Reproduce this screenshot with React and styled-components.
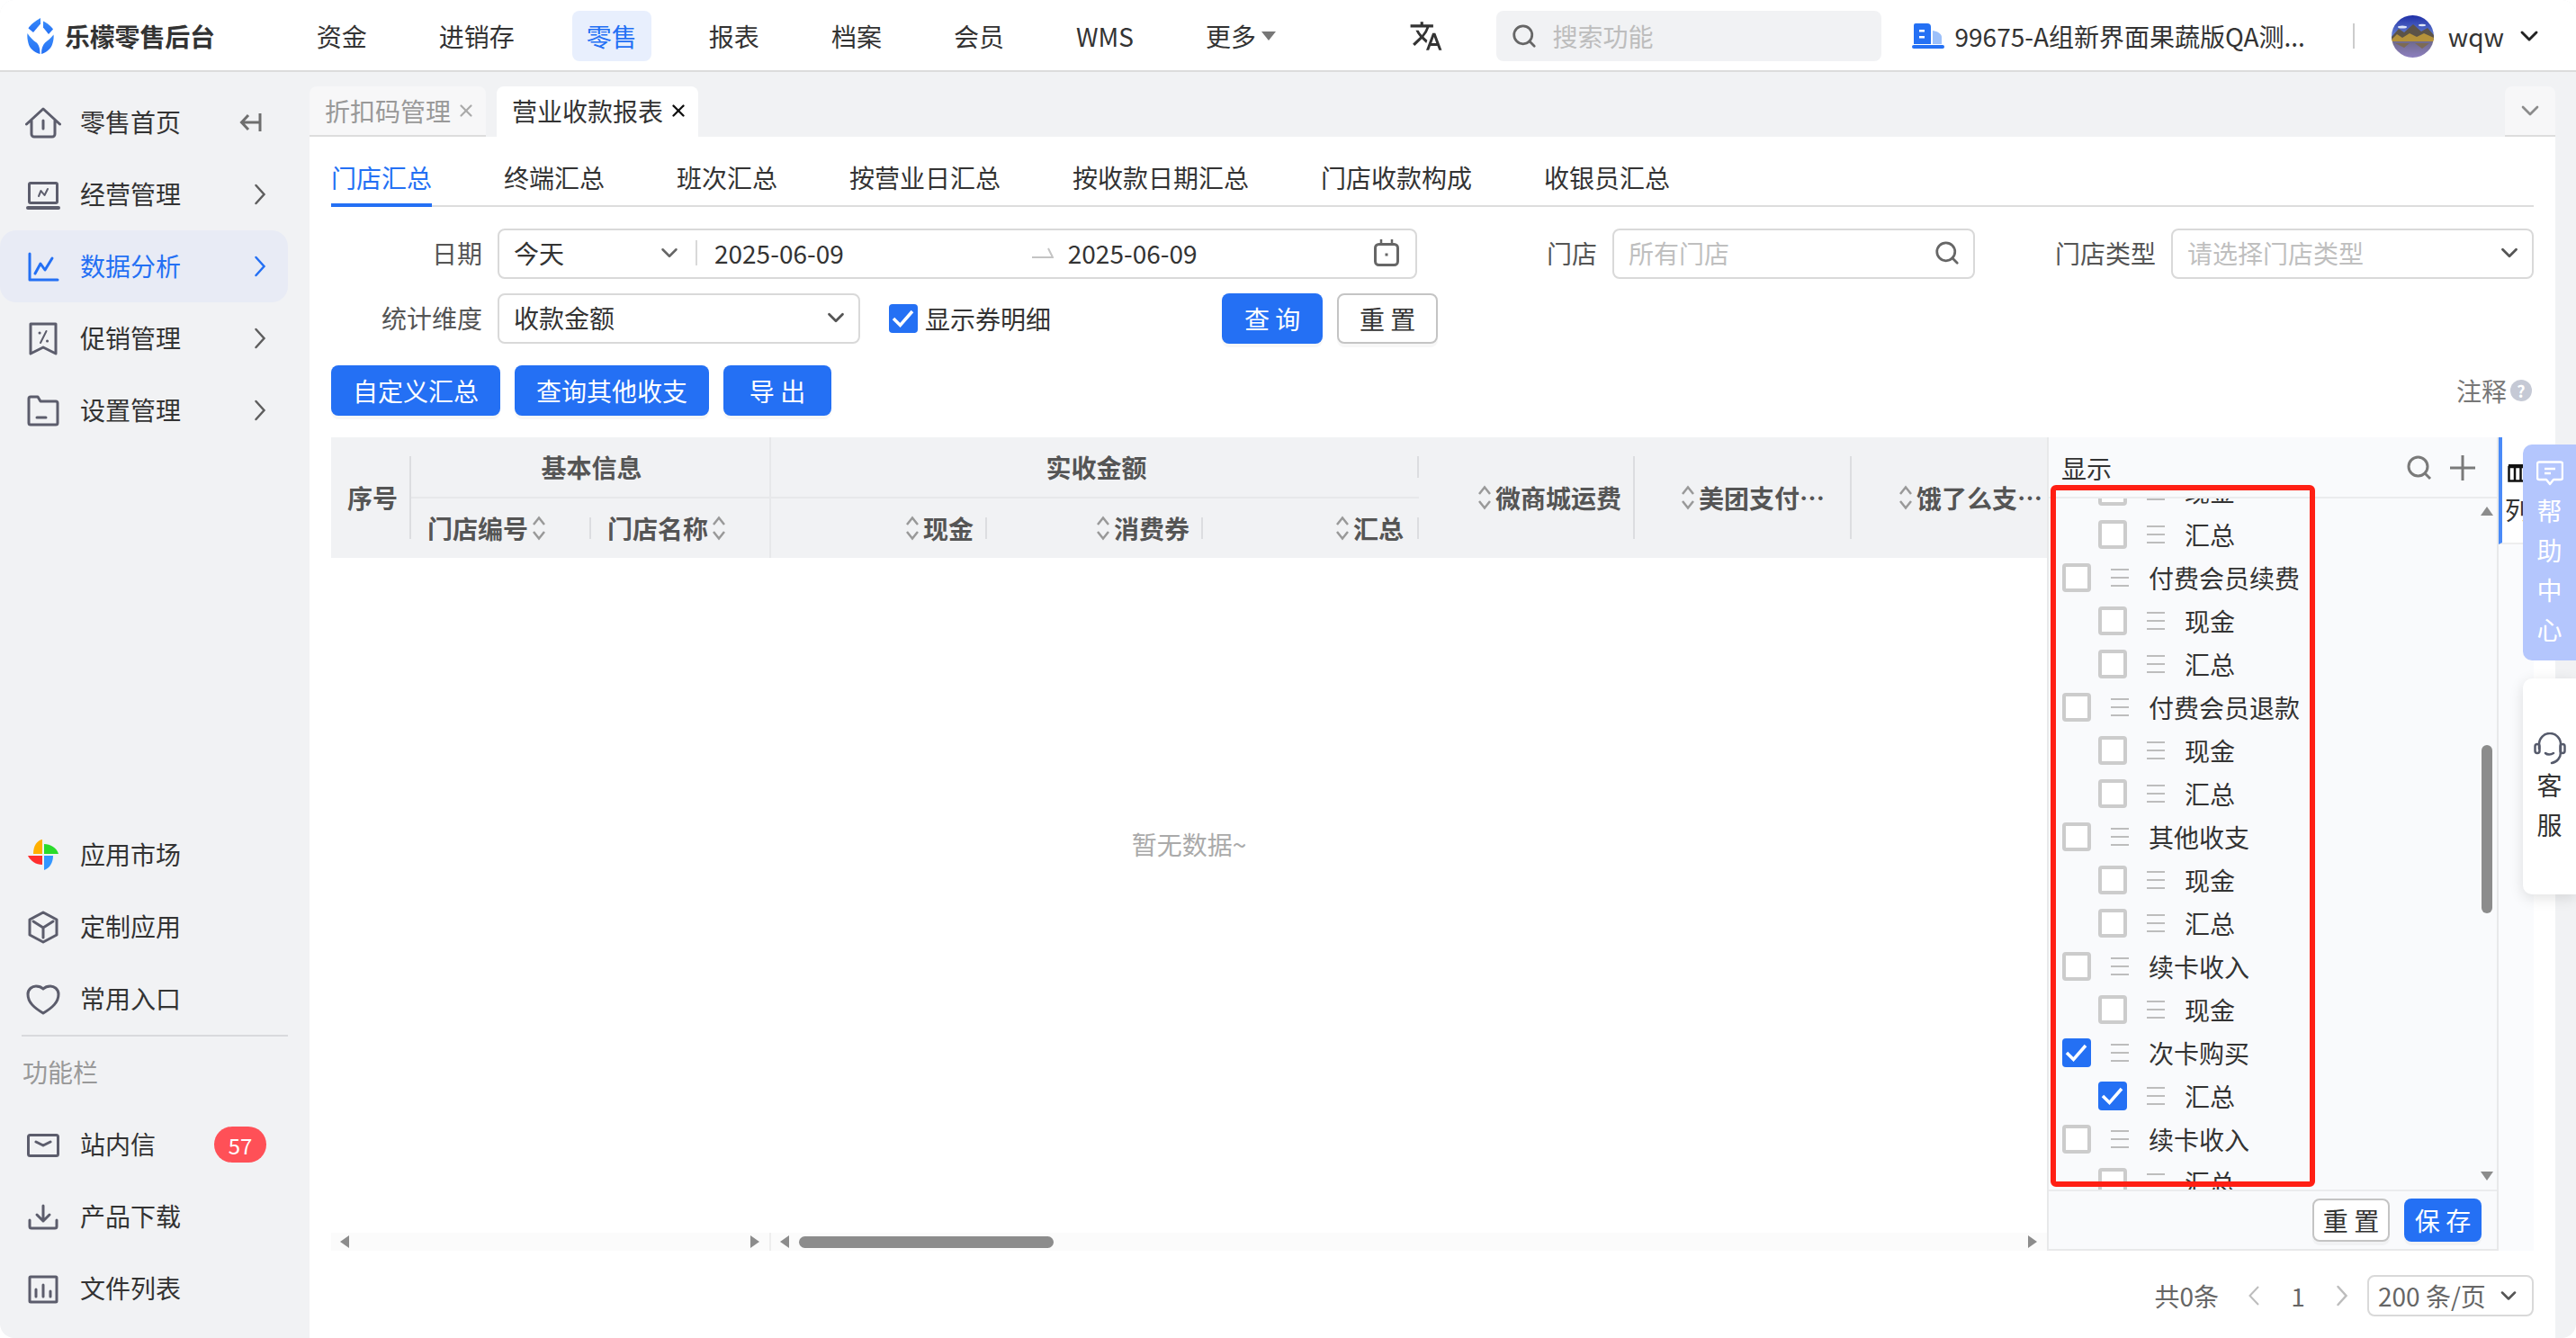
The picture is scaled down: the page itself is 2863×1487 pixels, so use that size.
import React from 'react'
import styled, { createGlobalStyle } from 'styled-components'
import { ChevronDown, Search, X } from 'lucide-react'
import { MdTranslate } from 'react-icons/md'

const BLUE = '#2470f4'
const INK = '#333'
const ICON = '#5c5d6c'

const navItems = ['资金', '进销存', '零售', '报表', '档案', '会员', 'WMS']
const subTabs = ['门店汇总', '终端汇总', '班次汇总', '按营业日汇总', '按收款日期汇总', '门店收款构成', '收银员汇总']

const columnRows = [
    { label: '现金', child: true },
    { label: '汇总', child: true },
    { label: '付费会员续费' },
    { label: '现金', child: true },
    { label: '汇总', child: true },
    { label: '付费会员退款' },
    { label: '现金', child: true },
    { label: '汇总', child: true },
    { label: '其他收支' },
    { label: '现金', child: true },
    { label: '汇总', child: true },
    { label: '续卡收入' },
    { label: '现金', child: true },
    { label: '次卡购买', checked: true },
    { label: '汇总', child: true, checked: true },
    { label: '续卡收入' },
    { label: '汇总', child: true }
]

const LineIcon = ({ children, color = ICON }) => (
    <svg width='40' height='40' viewBox='0 0 40 40' fill='none' stroke={color} strokeWidth='3' strokeLinecap='round' strokeLinejoin='round'>
        {children}
    </svg>
)

const HomeIcon = () => <LineIcon><path d='M1.5 22 L20 5 L38.5 22 M7 18 V33 a3 3 0 0 0 3 3 H30 a3 3 0 0 0 3 -3 V18 M20 18 v9' /></LineIcon>
const BoardIcon = () => (
    <LineIcon>
        <rect x='4.5' y='7.5' width='31' height='22' rx='1.5' />
        <path d='M3 35 H37' strokeWidth='4' />
        <path d='M15 22 L17.5 16 L21.5 21 L25 14' strokeWidth='2' />
    </LineIcon>
)
const ChartIcon = ({ color }) => <LineIcon color={color}><path d='M5 6 V35 H36' /><path d='M11 28 L17 17 L22 24 L30 11' /></LineIcon>
const PromoIcon = () => (
    <LineIcon>
        <path d='M6 4 H34 V37 L20 30 L6 37 Z' />
        <path d='M23.5 12 L17 25' strokeWidth='2' />
        <path d='M16 14 h.1 M24.5 23 h.1' strokeWidth='3' />
    </LineIcon>
)
const FolderIcon = () => <LineIcon><path d='M4 7 a2 2 0 0 1 2 -2 H14 L17 10 H34 a2 2 0 0 1 2 2 V34 a2 2 0 0 1 -2 2 H6 a2 2 0 0 1 -2 -2 Z M13 28 H23' /></LineIcon>
const CubeIcon = () => <LineIcon><path d='M20 4 L35 12 V29 L20 37 L5 29 V12 Z M9 14 L20 21 L31 14 M20 21 V32' /></LineIcon>
const HeartIcon = () => <LineIcon><path d='M20 36 C10 30 3 24 3 15 C3 9 8 6 12 6 C15 6 18 7 20 9 C22 7 25 6 28 6 C32 6 37 9 37 15 C37 24 30 30 20 36 Z' /></LineIcon>
const MailIcon = () => <LineIcon><rect x='3.5' y='9.5' width='33' height='23' rx='2' /><path d='M12 17 L20 21 L28 17' /></LineIcon>
const DownloadIcon = () => <LineIcon><path d='M20 8 V25 M13 18 L20 25 L27 18 M5 24 V31 a2 2 0 0 0 2 2 H33 a2 2 0 0 0 2 -2 V24' /></LineIcon>
const BarsIcon = () => <LineIcon><rect x='5' y='7' width='30' height='28' rx='1' /><path d='M12 21 V29 M20 16 V29 M28 23 V29' /></LineIcon>

const WheelIcon = () => (
    <svg width='40' height='40' viewBox='0 0 40 40'>
        <path d='M19 3 C13 4 9 10 9 19 H19 Z' fill='#ffb000' />
        <path d='M21 8 C28 8 35 12 37 19 H21 Z' fill='#2bdb2b' />
        <path d='M21 21 H31 C31 29 27 35 21 37 Z' fill='#3396ff' />
        <path d='M3 21 H19 V31 C12 31 6 27 3 21 Z' fill='#ff2e2e' />
    </svg>
)

const CollapseIcon = () => (
    <svg width='26' height='22' viewBox='0 0 26 22' fill='none' stroke='#6e6e6e' strokeWidth='3'>
        <path d='M23 1 V21 M23 11 H3 M10 3 L2.5 11 L10 19' />
    </svg>
)

const NextIcon = ({ color = '#5e5e5e' }) => (
    <svg width='14' height='26' viewBox='0 0 14 26' fill='none' stroke={color} strokeWidth='2.5' strokeLinecap='round'>
        <path d='M2.5 3 L11.5 13 L2.5 23' />
    </svg>
)

const PrevIcon = () => (
    <svg width='14' height='26' viewBox='0 0 14 26' fill='none' stroke='#bdbdbd' strokeWidth='2'>
        <path d='M12 3 L2.5 13 L12 23' />
    </svg>
)

const LogoMark = () => (
    <svg width='30' height='40' viewBox='0 0 30 40'>
        <defs>
            <linearGradient id='logoFill' x1='0' y1='0' x2='0' y2='1'>
                <stop offset='0' stopColor='#3a8cfa' />
                <stop offset='1' stopColor='#2470f4' />
            </linearGradient>
        </defs>
        <g fill='url(#logoFill)'>
            <path d='M15 0 V6.5 L7 16 L1.5 11.5 C3 8 10 3 15 0 Z' />
            <path d='M18 3.5 C22 5.5 27 9 29 12.5 L24 18 L18 10.5 Z' />
            <path d='M0.5 17 C3 21 7 25 10 27 C13 29 14.5 33 14.5 40 C8 38 3 34 1.5 28 C0.5 24 0 20 0.5 17 Z' />
            <path d='M29.5 18.5 C27 22 23 25 20 27.5 C17.5 30 16 34 16 40 C22 38 27 34 28.5 28 C29.5 25 30 21 29.5 18.5 Z' />
        </g>
    </svg>
)

const StoreIcon = () => (
    <svg width='36' height='28' viewBox='0 0 36 28'>
        <path d='M2 2 a2 2 0 0 1 2 -2 H17 a4 4 0 0 1 4 4 V23 H2 Z' fill={BLUE} />
        <path d='M23 8 C29 9 33 12 33 15 V23 H23 Z' fill='#9cc0fa' />
        <rect x='0' y='24' width='36' height='4' rx='2' fill={BLUE} />
        <rect x='8' y='7' width='6' height='2.5' fill='#fff' />
        <rect x='8' y='14' width='6' height='2.5' fill='#fff' />
    </svg>
)

const AvatarImage = () => (
    <svg width='47' height='47' viewBox='0 0 47 47'>
        <defs>
            <clipPath id='avatarClip'><circle cx='23.5' cy='23.5' r='23.5' /></clipPath>
            <linearGradient id='avatarSky' x1='0' y1='0' x2='0' y2='1'>
                <stop offset='0' stopColor='#1f2fa8' />
                <stop offset='1' stopColor='#6e8ad6' />
            </linearGradient>
            <linearGradient id='avatarLake' x1='0' y1='0' x2='0' y2='1'>
                <stop offset='0' stopColor='#6f6a8c' />
                <stop offset='1' stopColor='#8d7fc0' />
            </linearGradient>
        </defs>
        <g clipPath='url(#avatarClip)'>
            <rect width='47' height='26' fill='url(#avatarSky)' />
            <ellipse cx='12' cy='13' rx='5' ry='1.5' fill='#dfe6f7' />
            <ellipse cx='34' cy='11' rx='4' ry='1.2' fill='#dfe6f7' />
            <path d='M0 24 L8 15 L14 19 L24 10 L33 18 L40 14 L47 22 V28 H0 Z' fill='#5c5348' />
            <path d='M0 27 L6 21 L12 25 L20 20 L28 24 L36 20 L47 25 V30 H0 Z' fill='#b5923a' />
            <rect y='29' width='47' height='18' fill='url(#avatarLake)' />
            <path d='M4 31 H20 L14 36 Z M26 31 H42 L34 37 Z' fill='#7c6a55' />
        </g>
    </svg>
)

const CalendarIcon = () => (
    <svg width='28' height='30' viewBox='0 0 28 30' fill='none' stroke='#666' strokeWidth='3'>
        <rect x='1.5' y='5.5' width='25' height='23' rx='4' />
        <path d='M8 0 V6 M20 0 V6' strokeWidth='2.5' />
        <path d='M12.5 17 h3' strokeWidth='3' />
    </svg>
)

const RangeArrow = () => (
    <svg width='24' height='14' viewBox='0 0 24 14' fill='none' stroke='#c4c4c4' strokeWidth='2'>
        <path d='M0 12 H23 L18 2' />
    </svg>
)

const SortIcon = () => (
    <svg width='16' height='28' viewBox='0 0 16 28' fill='none' stroke='#999' strokeWidth='2.5'>
        <path d='M2 10 L8 2.5 L14 10 M2 18 L8 25.5 L14 18' />
    </svg>
)

const TickIcon = ({ size = 32 }) => (
    <svg width={size} height={size} viewBox='0 0 32 32' fill='none' stroke='#fff' strokeWidth='3.5'>
        <path d='M5 16 L12.5 23.5 L26 8' />
    </svg>
)

const DragIcon = () => (
    <svg width='20' height='20' viewBox='0 0 20 20' stroke='#bdbdbd' strokeWidth='2'>
        <path d='M0 1 H20 M0 10 H20 M0 19 H20' />
    </svg>
)

const Triangle = ({ dir }) => {
    const points = {
        up: '0,10 7,0 14,10',
        down: '0,0 14,0 7,10',
        left: '10,0 10,14 0,7',
        right: '0,0 10,7 0,14'
    }
    const vertical = dir === 'up' || dir === 'down'
    return (
        <svg width={vertical ? 14 : 10} height={vertical ? 10 : 14} viewBox={vertical ? '0 0 14 10' : '0 0 10 14'}>
            <polygon points={points[dir]} fill='#8c8c8c' />
        </svg>
    )
}

const PanelSearch = () => (
    <svg width='28' height='28' viewBox='0 0 28 28' fill='none' stroke='#7a7a7a' strokeWidth='3'>
        <circle cx='12.5' cy='12.5' r='10.5' />
        <path d='M20 20 L26 26' />
    </svg>
)

const PanelPlus = () => (
    <svg width='28' height='28' viewBox='0 0 28 28' stroke='#7a7a7a' strokeWidth='3'>
        <path d='M14 0 V28 M0 14 H28' />
    </svg>
)

const ColumnsIcon = () => (
    <svg width='22' height='20' viewBox='0 0 22 20' fill='none' stroke='#111' strokeWidth='2.5'>
        <path d='M1.5 3 H20.5 V18.5 H1.5 Z M8 3 V18.5 M14.5 3 V18.5' />
        <path d='M1 2 H21' strokeWidth='4' />
    </svg>
)

const BubbleIcon = () => (
    <svg width='30' height='28' viewBox='0 0 30 28' fill='none' stroke='#fff' strokeWidth='2.5' strokeLinejoin='round'>
        <path d='M3 1.5 H27 a2 2 0 0 1 2 2 V19 a2 2 0 0 1 -2 2 H19 L15 26 L11 21 H3 a2 2 0 0 1 -2 -2 V3.5 a2 2 0 0 1 2 -2 Z' />
        <path d='M9 9 H21 M9 14 H16' />
    </svg>
)

const HeadsetIcon = () => (
    <svg width='36' height='36' viewBox='0 0 36 36' fill='none' stroke='#555a6b' strokeWidth='2.5' strokeLinecap='round'>
        <path d='M6 18 V13 a12 12 0 0 1 24 0 V22 C30 28 26 33 20 34' />
        <rect x='1.5' y='13' width='5' height='10' rx='2.5' />
        <rect x='29.5' y='13' width='5' height='10' rx='2.5' />
        <path d='M13 23 C15 25 19 25 22 23' />
    </svg>
)

const App = () => {

    return (
        <>
            <GlobalStyle />
            <Shell>
                <TopBar>
                    <LogoBox><LogoMark /></LogoBox>
                    <LogoText>乐檬零售后台</LogoText>
                    <Nav>
                        {navItems.map(item => (
                            <NavItem key={item} $active={item === '零售'}>{item}</NavItem>
                        ))}
                        <NavItem>更多<MoreCaret /></NavItem>
                    </Nav>
                    <TopRight>
                        <MdTranslate size={38} color='#333' />
                        <SearchBox>
                            <Search size={30} color='#666' strokeWidth={2.2} />
                            <span>搜索功能</span>
                        </SearchBox>
                        <StoreBox>
                            <StoreIcon />
                            <span>99675-A组新界面果蔬版QA测...</span>
                        </StoreBox>
                        <TopDivider />
                        <AvatarImage />
                        <UserName>wqw</UserName>
                        <ChevronDown size={32} color='#222' strokeWidth={2.2} />
                    </TopRight>
                </TopBar>

                <Main>
                    <Sidebar>
                        <TopMenu>
                            <SideRow><HomeIcon /><SideLabel>零售首页</SideLabel><CollapseBox><CollapseIcon /></CollapseBox></SideRow>
                            <SideRow><BoardIcon /><SideLabel>经营管理</SideLabel><NextIcon /></SideRow>
                            <SideRow $active><ChartIcon color={BLUE} /><SideLabel>数据分析</SideLabel><NextIcon color={BLUE} /></SideRow>
                            <SideRow><PromoIcon /><SideLabel>促销管理</SideLabel><NextIcon /></SideRow>
                            <SideRow><FolderIcon /><SideLabel>设置管理</SideLabel><NextIcon /></SideRow>
                        </TopMenu>
                        <BottomMenu>
                            <SideRow><WheelIcon /><SideLabel>应用市场</SideLabel></SideRow>
                            <SideRow><CubeIcon /><SideLabel>定制应用</SideLabel></SideRow>
                            <SideRow><HeartIcon /><SideLabel>常用入口</SideLabel></SideRow>
                            <SideDivider />
                            <SideTitle>功能栏</SideTitle>
                            <SideRow><MailIcon /><SideLabel>站内信</SideLabel><CountBadge>57</CountBadge></SideRow>
                            <SideRow><DownloadIcon /><SideLabel>产品下载</SideLabel></SideRow>
                            <SideRow><BarsIcon /><SideLabel>文件列表</SideLabel></SideRow>
                        </BottomMenu>
                    </Sidebar>

                    <Content>
                        <PageTabs>
                            <PageTabList>
                                <PageTab>折扣码管理<X size={22} color='#aaa' strokeWidth={2.4} /></PageTab>
                                <PageTab $active>营业收款报表<X size={22} color='#111' strokeWidth={2.6} /></PageTab>
                            </PageTabList>
                            <TabsMore><ChevronDown size={32} color='#8c8c8c' strokeWidth={2} /></TabsMore>
                        </PageTabs>

                        <Card>
                            <SubTabs>
                                {subTabs.map((tab, i) => (
                                    <SubTab key={tab} $active={i === 0}>{tab}</SubTab>
                                ))}
                            </SubTabs>

                            <FilterRow>
                                <FieldLabel $width='168px'>日期</FieldLabel>
                                <Field $width='1022px'>
                                    <RangeSelect>今天<ChevronDown size={30} color='#666' strokeWidth={2} /></RangeSelect>
                                    <RangeDate>2025-06-09</RangeDate>
                                    <RangeGap><RangeArrow /></RangeGap>
                                    <span>2025-06-09</span>
                                    <FieldEnd $gap='18px'><CalendarIcon /></FieldEnd>
                                </Field>
                                <FieldLabel $width='200px'>门店</FieldLabel>
                                <Field $width='403px' $muted>
                                    <span>所有门店</span>
                                    <FieldEnd $gap='14px'><Search size={30} color='#666' strokeWidth={2.2} /></FieldEnd>
                                </Field>
                                <FieldLabel $width='201px'>门店类型</FieldLabel>
                                <Field $width='403px' $muted>
                                    <span>请选择门店类型</span>
                                    <FieldEnd $gap='10px'><ChevronDown size={30} color='#555' strokeWidth={2.2} /></FieldEnd>
                                </Field>
                            </FilterRow>

                            <FilterRow>
                                <FieldLabel $width='168px'>统计维度</FieldLabel>
                                <Field $width='403px'>
                                    <span>收款金额</span>
                                    <FieldEnd $gap='10px'><ChevronDown size={30} color='#555' strokeWidth={2.2} /></FieldEnd>
                                </Field>
                                <DetailToggle>
                                    <CheckBox $checked><TickIcon /></CheckBox>
                                    <span>显示券明细</span>
                                </DetailToggle>
                                <ActionGroup>
                                    <Button $primary>查 询</Button>
                                    <Button>重 置</Button>
                                </ActionGroup>
                            </FilterRow>

                            <ToolRow>
                                <Button $primary $width='188px'>自定义汇总</Button>
                                <Button $primary $width='216px'>查询其他收支</Button>
                                <Button $primary $width='120px'>导 出</Button>
                                <NoteLink>注释<HelpDot>?</HelpDot></NoteLink>
                            </ToolRow>

                            <TableWrap>
                                <TableArea>
                                    <TableHead>
                                        <HeadCell $rows={2} $center $mark='tall'>序号</HeadCell>
                                        <HeadCell $cols={2} $center $edge>基本信息</HeadCell>
                                        <HeadCell $cols={3} $center $mark='short'>实收金额</HeadCell>
                                        <HeadCell $rows={2} $right $pad='15px' $mark='tall'><SortIcon />微商城运费</HeadCell>
                                        <HeadCell $rows={2} $right $pad='30px' $mark='tall'><SortIcon />美团支付…</HeadCell>
                                        <HeadCell $rows={2} $right $pad='5px'><SortIcon />饿了么支…</HeadCell>
                                        <HeadCell $top $mark='short'>门店编号<SortIcon /></HeadCell>
                                        <HeadCell $top $edge>门店名称<SortIcon /></HeadCell>
                                        <HeadCell $top $right $pad='15px' $mark='short'><SortIcon />现金</HeadCell>
                                        <HeadCell $top $right $pad='15px' $mark='short'><SortIcon />消费券</HeadCell>
                                        <HeadCell $top $right $pad='17px' $mark='short'><SortIcon />汇总</HeadCell>
                                    </TableHead>
                                    <TableBody>暂无数据~</TableBody>
                                    <ScrollRow>
                                        <ScrollPart $width='489px'>
                                            <Triangle dir='left' />
                                            <Triangle dir='right' />
                                        </ScrollPart>
                                        <ScrollPart>
                                            <Triangle dir='left' />
                                            <ScrollThumb />
                                            <Triangle dir='right' />
                                        </ScrollPart>
                                    </ScrollRow>
                                </TableArea>

                                <ColumnPanel>
                                    <PanelHead>
                                        <span>显示</span>
                                        <PanelTools><PanelSearch /><PanelPlus /></PanelTools>
                                    </PanelHead>
                                    <PanelBody>
                                        <ColumnList>
                                            {columnRows.map((row, i) => (
                                                <ColumnRow key={i} $child={row.child}>
                                                    <CheckBox $checked={row.checked}>{row.checked && <TickIcon />}</CheckBox>
                                                    <DragIcon />
                                                    <span>{row.label}</span>
                                                </ColumnRow>
                                            ))}
                                        </ColumnList>
                                        <ListScroll>
                                            <Triangle dir='up' />
                                            <ListThumb />
                                            <Triangle dir='down' />
                                        </ListScroll>
                                    </PanelBody>
                                    <PanelFoot>
                                        <Button $small>重 置</Button>
                                        <Button $small $primary>保 存</Button>
                                    </PanelFoot>
                                    <RedFrame />
                                </ColumnPanel>

                                <ColumnBar>
                                    <ColumnTab>
                                        <ColumnsIcon />
                                        <ColumnWord>列</ColumnWord>
                                    </ColumnTab>
                                </ColumnBar>
                            </TableWrap>

                            <Pager>
                                <PagerTotal>共0条</PagerTotal>
                                <PrevIcon />
                                <PagerNumber>1</PagerNumber>
                                <PagerNext><NextIcon color='#bdbdbd' /></PagerNext>
                                <PageSize>200 条/页<ChevronDown size={28} color='#555' strokeWidth={2.2} /></PageSize>
                            </Pager>
                        </Card>
                    </Content>
                </Main>

                <HelpTab>
                    <BubbleIcon />
                    <span>帮</span><span>助</span><span>中</span><span>心</span>
                </HelpTab>
                <ServiceTab>
                    <HeadsetIcon />
                    <span>客</span><span>服</span>
                </ServiceTab>
            </Shell>
        </>
    )
}

export default App

const GlobalStyle = createGlobalStyle`
    html, body {
        margin: 0;
        padding: 0;
        background: #fff;
    }

    body {
        font-family: "Noto Sans CJK SC", "Noto Sans", sans-serif;
        font-size: 28px;
        color: ${INK};
    }

    * {
        box-sizing: border-box;
    }
`

const Shell = styled.div`
    position: relative;
    width: 2863px;
    height: 1487px;
    overflow: hidden;
    border-radius: 16px;
    background: #f1f2f4;
    display: flex;
    flex-direction: column;
`

const TopBar = styled.header`
    height: 80px;
    flex-shrink: 0;
    display: flex;
    align-items: center;
    padding: 2px 36px 0 30px;
    background: #fff;
    border-bottom: 2px solid #dcdcdc;
`

const LogoBox = styled.div`
    display: flex;
    margin-right: 12px;
`

const LogoText = styled.div`
    font-weight: 700;
    font-size: 28px;
    letter-spacing: -0.2px;
    color: #333;
`

const Nav = styled.nav`
    display: flex;
    gap: 48px;
    margin-left: 97px;
`

const NavItem = styled.div`
    height: 56px;
    padding: 0 16px;
    display: flex;
    align-items: center;
    border-radius: 8px;
    background: ${p => p.$active ? '#e8effd' : 'transparent'};
    color: ${p => p.$active ? BLUE : INK};
`

const MoreCaret = styled.i`
    width: 0;
    height: 0;
    margin-left: 6px;
    border-left: 8px solid transparent;
    border-right: 8px solid transparent;
    border-top: 10px solid #777;
`

const TopRight = styled.div`
    display: flex;
    align-items: center;
    margin-left: auto;
`

const SearchBox = styled.div`
    width: 428px;
    height: 56px;
    margin-left: 59px;
    padding-left: 16px;
    display: flex;
    align-items: center;
    gap: 17px;
    border-radius: 8px;
    background: #f1f2f4;
    color: #bdbdbd;
`

const StoreBox = styled.div`
    margin-left: 34px;
    display: flex;
    align-items: center;
    gap: 12px;
    white-space: nowrap;
`

const TopDivider = styled.div`
    width: 2px;
    height: 28px;
    margin: 0 41px 0 53px;
    background: #ccc;
`

const UserName = styled.span`
    margin: 0 12px 0 16px;
`

const Main = styled.main`
    flex: 1;
    min-height: 0;
    display: flex;
`

const Sidebar = styled.aside`
    width: 344px;
    flex-shrink: 0;
    display: flex;
    flex-direction: column;
    justify-content: space-between;
`

const TopMenu = styled.div`
    padding-top: 16px;
`

const BottomMenu = styled.div`
    padding-bottom: 15px;
`

const SideRow = styled.div`
    width: 320px;
    height: 80px;
    padding: 0 24px 0 28px;
    display: flex;
    align-items: center;
    gap: 21px;
    border-radius: 18px;
    background: ${p => p.$active ? '#e8ebf5' : 'transparent'};
    color: ${p => p.$active ? BLUE : INK};
`

const SideLabel = styled.span`
    flex: 1;
    padding-bottom: 2px;
`

const CollapseBox = styled.span`
    display: flex;
    margin-right: 4px;
`

const SideDivider = styled.div`
    height: 2px;
    margin: 0 24px;
    background: #d9dadd;
`

const SideTitle = styled.div`
    height: 80px;
    padding: 0 0 2px 25px;
    display: flex;
    align-items: center;
    color: #999;
`

const CountBadge = styled.span`
    width: 58px;
    height: 40px;
    display: flex;
    align-items: center;
    justify-content: center;
    border-radius: 20px;
    background: #ff5057;
    color: #fff;
    font-size: 24px;
`

const Content = styled.section`
    flex: 1;
    min-width: 0;
    margin-right: 23px;
    display: flex;
    flex-direction: column;
`

const PageTabs = styled.div`
    height: 72px;
    padding-top: 16px;
    flex-shrink: 0;
    display: flex;
    justify-content: space-between;
`

const PageTabList = styled.div`
    display: flex;
    gap: 12px;
`

const PageTab = styled.div`
    padding: 0 11px 0 17px;
    display: flex;
    align-items: center;
    gap: 6px;
    border-radius: 8px 8px 0 0;
    background: ${p => p.$active ? '#fff' : '#f7f7f8'};
    border-bottom: 2px solid ${p => p.$active ? '#fff' : '#ddd'};
    color: ${p => p.$active ? INK : '#999'};
`

const TabsMore = styled.div`
    width: 56px;
    display: flex;
    align-items: center;
    justify-content: center;
    border-radius: 8px 8px 0 0;
    background: #f7f7f8;
    border-bottom: 2px solid #ddd;
`

const Card = styled.div`
    flex: 1;
    min-height: 0;
    padding: 0 24px;
    background: #fff;
`

const SubTabs = styled.div`
    height: 78px;
    padding-top: 20px;
    display: flex;
    align-items: flex-start;
    gap: 80px;
    border-bottom: 2px solid #ddd;
`

const SubTab = styled.div`
    height: 58px;
    padding-bottom: 4px;
    line-height: 50px;
    white-space: nowrap;
    border-bottom: 4px solid ${p => p.$active ? BLUE : 'transparent'};
    color: ${p => p.$active ? BLUE : INK};
`

const FilterRow = styled.div`
    height: 56px;
    margin-top: 24px;
    display: flex;
    align-items: center;

    & + & {
        margin-top: 16px;
    }
`

const FieldLabel = styled.label`
    width: ${p => p.$width};
    margin-right: 17px;
    padding-bottom: 2px;
    text-align: right;
    color: #555;
    flex-shrink: 0;
`

const Field = styled.div`
    width: ${p => p.$width};
    height: 56px;
    padding: 0 0 2px 16px;
    flex-shrink: 0;
    display: flex;
    align-items: center;
    border: 2px solid #d9d9d9;
    border-radius: 8px;
    color: ${p => p.$muted ? '#bfbfbf' : INK};
`

const FieldEnd = styled.span`
    margin-left: auto;
    margin-right: ${p => p.$gap};
    display: flex;
`

const RangeSelect = styled.div`
    width: 204px;
    height: 28px;
    padding-right: 14px;
    display: flex;
    align-items: center;
    justify-content: space-between;
    border-right: 2px solid #d9d9d9;
    line-height: 28px;
`

const RangeDate = styled.span`
    margin-left: 19px;
`

const RangeGap = styled.span`
    margin: 0 16px 0 209px;
    display: flex;
`

const DetailToggle = styled.div`
    margin-left: 32px;
    display: flex;
    align-items: center;
    gap: 8px;
    white-space: nowrap;
`

const CheckBox = styled.span`
    width: 32px;
    height: 32px;
    flex-shrink: 0;
    display: flex;
    align-items: center;
    justify-content: center;
    border-radius: 4px;
    background: ${p => p.$checked ? BLUE : '#fff'};
    border: ${p => p.$checked ? 'none' : '4px solid #ccc'};
`

const ActionGroup = styled.div`
    margin-left: 190px;
    display: flex;
    gap: 16px;
`

const Button = styled.button`
    width: ${p => p.$small ? '86px' : p.$width || '112px'};
    height: ${p => p.$small ? '48px' : '56px'};
    padding: 0;
    font: inherit;
    border-radius: 8px;
    white-space: pre;
    border: ${p => p.$primary ? 'none' : '2px solid #c4c4c4'};
    background: ${p => p.$primary ? BLUE : '#fff'};
    color: ${p => p.$primary ? '#fff' : INK};
    box-shadow: 0 4px 0 rgba(0, 0, 0, 0.03);
`

const ToolRow = styled.div`
    height: 56px;
    margin-top: 24px;
    display: flex;
    align-items: center;
    gap: 16px;
`

const NoteLink = styled.div`
    margin-left: auto;
    padding-right: 2px;
    display: flex;
    align-items: center;
    gap: 4px;
    color: #777;
`

const HelpDot = styled.span`
    width: 24px;
    height: 24px;
    display: flex;
    align-items: center;
    justify-content: center;
    border-radius: 50%;
    background: #c5c9d5;
    color: #fff;
    font-size: 18px;
    font-weight: 700;
`

const TableWrap = styled.div`
    height: 904px;
    margin-top: 24px;
    display: flex;
`

const TableArea = styled.div`
    width: 1907px;
    flex-shrink: 0;
    display: flex;
    flex-direction: column;
`

const TableHead = styled.div`
    height: 134px;
    flex-shrink: 0;
    display: grid;
    grid-template-columns: 89px 200px 200px 240px 240px 240px 240px 241px 217px;
    grid-template-rows: 66px 68px;
    background: #f1f2f4;
    font-weight: 700;
    color: #555;
`

const HeadCell = styled.div`
    position: relative;
    grid-column: span ${p => p.$cols || 1};
    grid-row: span ${p => p.$rows || 1};
    display: flex;
    align-items: center;
    overflow: hidden;
    white-space: nowrap;
    gap: 4px;
    justify-content: ${p => p.$center ? 'center' : p.$right ? 'flex-end' : 'flex-start'};
    padding: ${p => p.$right ? `0 ${p.$pad} 0 0` : p.$top ? '0 0 0 18px' : p.$center ? '0 0 0 3px' : '0'};
    border-top: ${p => p.$top ? '2px solid #e7e8ea' : 'none'};
    border-right: ${p => p.$edge ? '2px solid #e7e8ea' : 'none'};

    &::after {
        content: '';
        display: ${p => p.$mark ? 'block' : 'none'};
        position: absolute;
        right: 0;
        top: 50%;
        width: 2px;
        height: ${p => p.$mark === 'tall' ? '92px' : '24px'};
        transform: translateY(-50%);
        background: #dcdde0;
    }
`

const TableBody = styled.div`
    flex: 1;
    min-height: 0;
    padding-bottom: 114px;
    display: flex;
    align-items: center;
    justify-content: center;
    color: #aaa;
`

const ScrollRow = styled.div`
    height: 20px;
    flex-shrink: 0;
    display: flex;
    background: #fbfbfb;
`

const ScrollPart = styled.div`
    flex: ${p => p.$width ? `0 0 ${p.$width}` : '1'};
    padding: 0 11px 0 10px;
    display: flex;
    align-items: center;
    justify-content: space-between;
    border-right: ${p => p.$width ? '2px solid #eee' : 'none'};
`

const ScrollThumb = styled.div`
    width: 283px;
    height: 13px;
    margin: 0 auto 0 11px;
    border-radius: 7px;
    background: #8c8c8c;
`

const ColumnPanel = styled.div`
    position: relative;
    width: 502px;
    flex-shrink: 0;
    display: flex;
    flex-direction: column;
    background: #f9fafc;
    border-left: 2px solid #e8e9ea;
    border-right: 2px solid #e8e9ea;
    border-bottom: 2px solid #e8e9ea;
`

const PanelHead = styled.div`
    height: 68px;
    flex-shrink: 0;
    padding: 14px 24px 0 14px;
    display: flex;
    align-items: flex-start;
    justify-content: space-between;
    border-bottom: 2px solid #ebecee;
    line-height: 40px;
`

const PanelTools = styled.div`
    display: flex;
    gap: 20px;
    padding-top: 6px;
`

const PanelBody = styled.div`
    flex: 1;
    min-height: 0;
    display: flex;
    overflow: hidden;
`

const ColumnList = styled.div`
    flex: 1;
    margin-top: -32px;
`

const ColumnRow = styled.div`
    height: 48px;
    padding-left: ${p => p.$child ? '55px' : '15px'};
    display: flex;
    align-items: center;
    gap: 22px;
    white-space: nowrap;
`

const ListScroll = styled.div`
    width: 20px;
    flex-shrink: 0;
    padding: 9px 2px 10px 0;
    display: flex;
    flex-direction: column;
    align-items: center;
    justify-content: flex-start;

    svg:last-child {
        margin-top: auto;
    }
`

const ListThumb = styled.div`
    width: 12px;
    height: 187px;
    margin-top: 255px;
    border-radius: 6px;
    background: #8c8c8c;
`

const PanelFoot = styled.div`
    height: 66px;
    flex-shrink: 0;
    padding: 8px 17px 0 0;
    display: flex;
    justify-content: flex-end;
    gap: 16px;
    border-top: 2px solid #ebecee;
`

const RedFrame = styled.div`
    position: absolute;
    left: 2px;
    top: 53px;
    width: 294px;
    height: 780px;
    border: 6px solid #ff1f14;
    border-radius: 6px;
    pointer-events: none;
`

const ColumnBar = styled.div`
    flex: 1;
    background: #fafbfd;
`

const ColumnTab = styled.div`
    height: 119px;
    padding: 30px 0 0 6px;
    display: flex;
    flex-direction: column;
    align-items: flex-start;
    background: #fff;
    border-left: 4px solid #4a8af8;
    border-bottom: 2px solid #eee;
    line-height: 40px;
    overflow: hidden;
    white-space: nowrap;
`

const ColumnWord = styled.span`
    margin: 10px 0 0 -3px;
`

const Pager = styled.div`
    height: 46px;
    margin-top: 27px;
    display: flex;
    align-items: center;
    justify-content: flex-end;
    color: #666;
`

const PagerTotal = styled.span`
    margin-right: 32px;
`

const PagerNumber = styled.span`
    width: 84px;
    text-align: center;
`

const PagerNext = styled.span`
    display: flex;
    margin-right: 21px;
`

const PageSize = styled.div`
    width: 185px;
    height: 46px;
    padding: 0 12px 0 10px;
    display: flex;
    align-items: center;
    justify-content: space-between;
    border: 2px solid #d9d9d9;
    border-radius: 8px;
    white-space: nowrap;
`

const HelpTab = styled.div`
    position: absolute;
    right: 0;
    top: 494px;
    width: 59px;
    height: 240px;
    padding-top: 18px;
    display: flex;
    flex-direction: column;
    align-items: center;
    gap: 4px;
    line-height: 40px;
    border-radius: 10px 0 0 10px;
    background: #b4c6fd;
    color: #fff;

    svg {
        margin-bottom: 3px;
    }
`

const ServiceTab = styled.div`
    position: absolute;
    right: 0;
    top: 754px;
    width: 59px;
    height: 240px;
    padding-top: 60px;
    display: flex;
    flex-direction: column;
    align-items: center;
    gap: 4px;
    line-height: 40px;
    border-radius: 10px 0 0 10px;
    background: #fff;
    box-shadow: 0 4px 16px rgba(0, 0, 0, 0.12);

    svg {
        margin-bottom: -2px;
    }
`
